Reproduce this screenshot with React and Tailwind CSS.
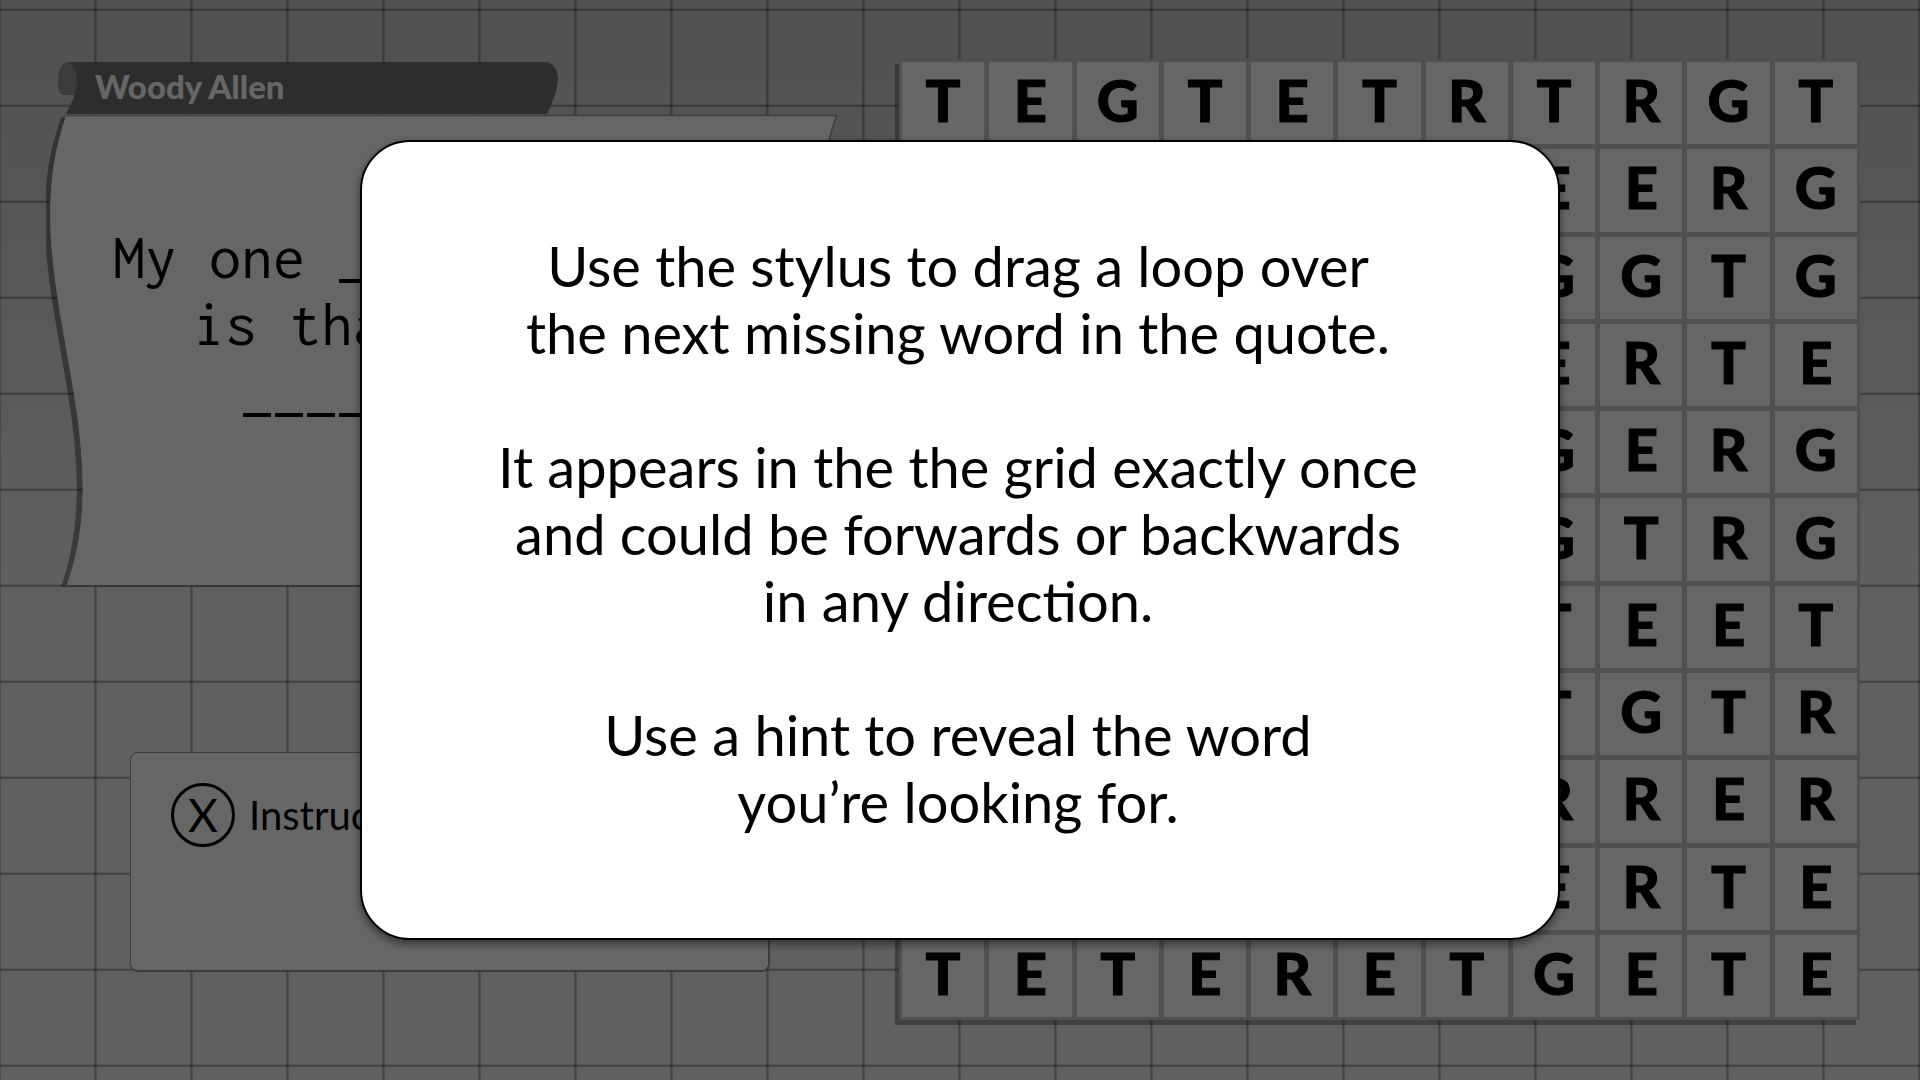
import { useState } from 'react';

const ROWS = [
  'TEGTETRTRGT',
  'GRETGEREERG',
  'ETRGETGGGTG',
  'RGTERTEERTE',
  'TEGRTEGGERG',
  'EGTREGTGTRG',
  'GRERGTETEET',
  'TETGRGETGTR',
  'RGETTERRRER',
  'ETGREGTERTE',
  'TETERETGETE',
];

const QUOTE = ['My one ______ in ____', 'is that I am not', '_______ ____.'];

const HELP = [
  ['Use the stylus to drag a loop over', 'the next missing word in the quote.'],
  ['It appears in the the grid exactly once', 'and could be forwards or backwards', 'in any direction.'],
  ['Use a hint to reveal the word', 'you’re looking for.'],
];

function Scroll() {
  return (
    <svg viewBox="46 59 796 530" preserveAspectRatio="none" className="absolute inset-0 h-full w-full" aria-hidden="true">
      {/* paper shadow, then the paper */}
      <path d="M61 118 C5 272 116 429 61 587 L837 587 L837 585 L67 585 C122 429 11 272 66 116 Z" fill="#000" fillOpacity="0.38" />
      <path d="M66 116 C11 272 122 429 67 585 L837 585 C892 429 781 272 836 116 Z" fill="#fff" />
      <path d="M66 115.5 L836.5 115.5 C781 272 892 429 837 585" fill="none" stroke="#9a9a9a" strokeWidth="1.5" />
      <path d="M64 586 L837 586" stroke="#8c8c8c" strokeWidth="2" />
      {/* name ribbon with its folded end */}
      <path d="M67 62 C60 64 58 73 58 81 C58 88 59 93 62 95 L76 95 L78 70 Z" fill="#939393" />
      <path d="M67 62 L546 62 C554 63 558 71 558 79 C557 92 552 103 547 114 L66 114 C72 102 77 92 77 80 C77 71 73 64 67 62 Z" fill="#707070" />
    </svg>
  );
}

function QuoteLine({ text }) {
  return (
    <p className="whitespace-pre">
      {text.split(/(_)/).map((part, i) =>
        part === '_' ? <span key={i} className="mx-[2px] -mb-[5px] inline-block h-1 w-7 bg-black align-baseline" /> : part
      )}
    </p>
  );
}

export default function App() {
  const [helpOpen, setHelpOpen] = useState(true);

  return (
    <div className="relative min-h-screen overflow-hidden bg-[linear-gradient(rgba(0,0,0,.1)_1px,rgba(0,0,0,.28)_1px,rgba(0,0,0,.28)_3px,transparent_3px),linear-gradient(90deg,rgba(0,0,0,.22)_1px,rgba(0,0,0,.28)_1px,rgba(0,0,0,.28)_2px,rgba(0,0,0,.18)_2px,rgba(0,0,0,.18)_3px,transparent_3px),linear-gradient(#cdcdcd_60px,#f0f0f0_620px)] bg-[size:96px_96px,96px_96px,100%_100%] bg-[position:0_8px,94px_0,0_0] font-[Lato,sans-serif] text-black">
      <main className="flex items-start justify-between pt-[59px] pr-[60px] pl-[46px]">
        <div className="w-[796px]">
          <section className="relative h-[530px]">
            <Scroll />
            <h1 className="relative pl-[49px] text-[33px]/[54px] font-black text-white">Woody Allen</h1>
            <div className="relative pt-[110px] pl-[10px] text-center font-[Inconsolata,'DejaVu_Sans_Mono',monospace] text-[64px]/[67px]">
              {QUOTE.map((line) => (
                <QuoteLine key={line} text={line} />
              ))}
            </div>
          </section>

          <section className="mt-[163px] ml-[84px] h-[220px] w-[640px] rounded-lg border border-r-2 border-b-2 border-[#9a9a9a] bg-white pt-[30px] pl-10">
            <button type="button" onClick={() => setHelpOpen(true)} className="flex items-center gap-3.5 text-[40px]/[64px]">
              <span className="flex size-16 items-center justify-center rounded-full border-3 border-black text-[46px]">X</span>
              Instructions
            </button>
          </section>
        </div>

        <div className="grid w-[961px] grid-cols-11 gap-[5px] bg-[#c8c8c8] p-[3px] shadow-[-4px_5px_0_rgba(0,0,0,.32)]">
          {ROWS.join('').split('').map((letter, i) => (
            <div key={i} className="flex aspect-square items-center justify-center bg-white pb-1.5 text-[58px]/[58px] font-black [-webkit-text-stroke:1px_black]">
              {letter}
            </div>
          ))}
        </div>
      </main>

      {helpOpen && (
        <div className="fixed inset-0 flex items-center justify-center bg-black/60" onClick={() => setHelpOpen(false)}>
          <div
            role="dialog"
            aria-label="Instructions"
            className="flex h-[800px] w-[1200px] flex-col items-center justify-center gap-[67px] rounded-[50px] border-2 border-black bg-white pr-1 pb-3.5 text-center text-[56px]/[67px] shadow-[0_4px_10px_rgba(0,0,0,.5)]"
          >
            {HELP.map((lines) => (
              <div key={lines[0]}>
                {lines.map((line) => (
                  <p key={line}>{line}</p>
                ))}
              </div>
            ))}
          </div>
        </div>
      )}
    </div>
  );
}
